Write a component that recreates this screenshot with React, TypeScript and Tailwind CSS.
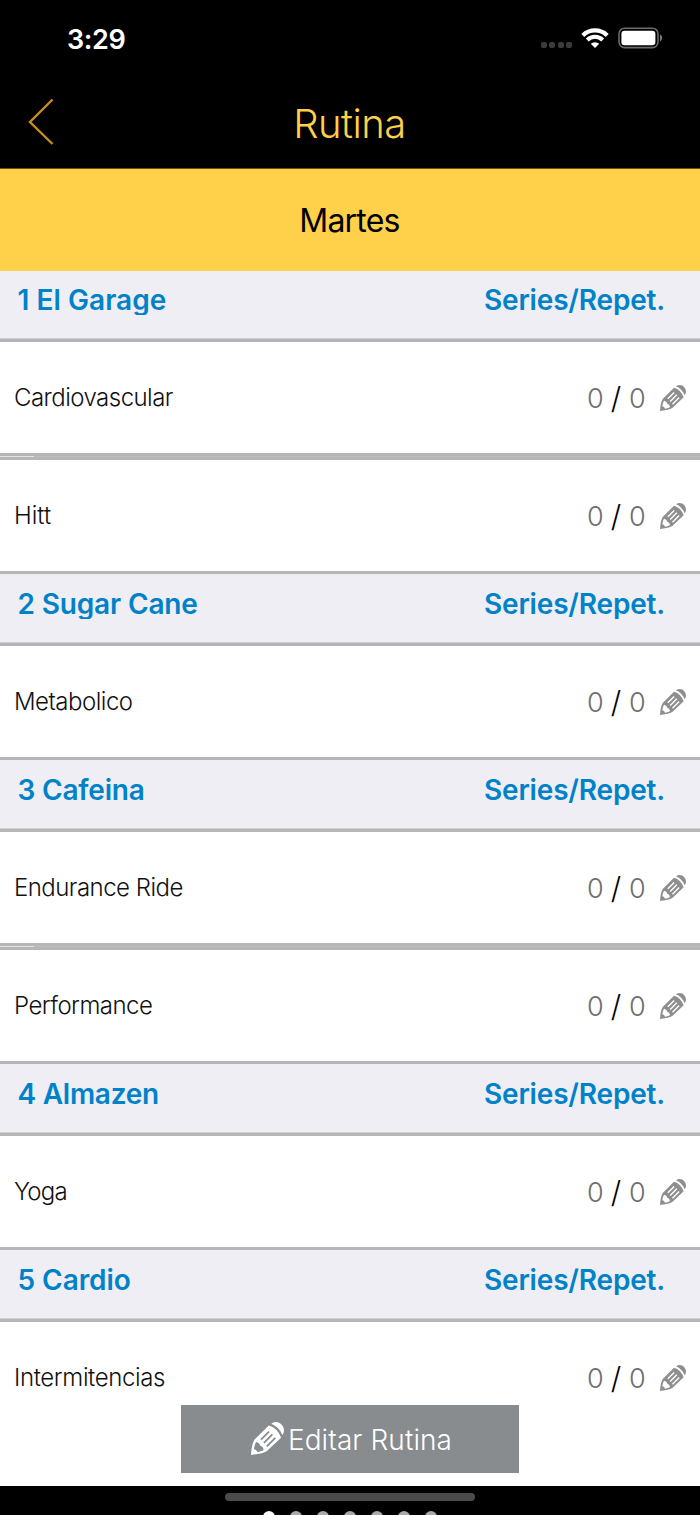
type Exercise = { name: string; spacing: string };
type Section = { title: string; spacing: string; rows: Exercise[] };

const sections: Section[] = [
  {
    title: "1 El Garage",
    spacing: "tracking-[0.05px]",
    rows: [
      { name: "Cardiovascular", spacing: "tracking-[-0.53px]" },
      { name: "Hitt", spacing: "tracking-[0px]" },
    ],
  },
  { title: "2 Sugar Cane", spacing: "tracking-[-0.15px]", rows: [{ name: "Metabolico", spacing: "tracking-[-0.5px]" }] },
  {
    title: "3 Cafeina",
    spacing: "tracking-[-0.2px]",
    rows: [
      { name: "Endurance Ride", spacing: "tracking-[-0.53px]" },
      { name: "Performance", spacing: "tracking-[-0.53px]" },
    ],
  },
  { title: "4 Almazen", spacing: "tracking-[-0.25px]", rows: [{ name: "Yoga", spacing: "tracking-[-0.8px]" }] },
  { title: "5 Cardio", spacing: "tracking-[-0.05px]", rows: [{ name: "Intermitencias", spacing: "tracking-[-0.37px]" }] },
];

function Pencil({ className }: { className: string }) {
  return (
    <svg viewBox="0 0 78 78" className={className} fill="currentColor">
      {/* eraser */}
      <path d="M48 4 C56 -2 66 -1 72 6 C79 13 80 23 74 31 C70 19 60 9 48 4Z" />
      {/* body, with the wood tip and the stripes cut out */}
      <path
        fillRule="evenodd"
        d="M42 8 C56 12 66 22 71 37 L37 69 C27 75 13 76 0 78 C1 66 2 52 8 42Z
           M12 47 C9 53 8 58 7 64 C11 65 14 68 15 71 C21 70 26 69 30 66 C29 60 26 57 22 56 C21 51 17 48 12 47Z
           M22 40 L41 21 L44 24 L25 43Z
           M29 48 L49 28 L52 31 L32 51Z
           M36 56 L56 36 L59 39 L39 59Z"
      />
    </svg>
  );
}

function StatusBar() {
  return (
    <div className="flex h-[76px] items-center pl-[67px] pr-[37px]">
      <span className="pt-[2px] text-[27px] leading-none font-semibold tracking-[-0.4px] text-white">3:29</span>
      <div className="ml-auto flex items-center">
        <div className="mt-[14px] flex gap-[2.5px]">
          <i className="size-[6px] rounded-[2px] bg-[#3b3b3b]" />
          <i className="size-[6px] rounded-[2px] bg-[#3b3b3b]" />
          <i className="size-[6px] rounded-[2px] bg-[#3b3b3b]" />
          <i className="size-[6px] rounded-[2px] bg-[#3b3b3b]" />
        </div>
        <svg viewBox="0 0 28 20" className="ml-[9px] h-[20px] w-[28px]" fill="none">
          <path d="M1.8 7.4 A17.5 17.5 0 0 1 26.2 7.4" stroke="white" strokeWidth="4.2" />
          <path d="M6.3 12 A11 11 0 0 1 21.7 12" stroke="white" strokeWidth="4" />
          <path d="M9.8 15.8 A6.2 6.2 0 0 1 18.2 15.8 L14 20Z" fill="white" />
        </svg>
        <svg viewBox="0 0 45 22" className="ml-[9px] h-[22px] w-[45px]" fill="none">
          <rect x="1" y="1.2" width="39" height="19.4" rx="5.5" stroke="#6b6b6b" strokeWidth="1.6" />
          <rect x="3.4" y="3.8" width="34" height="14.4" rx="3.2" fill="white" />
          <path d="M42 7.6 C44.8 8.8 44.8 13 42 14.4Z" fill="#7a7a7a" />
        </svg>
      </div>
    </div>
  );
}

function SectionHeader({ title, spacing, first }: { title: string; spacing: string; first: boolean }) {
  return (
    <div className={`${first ? "h-[71px]" : "h-[72px]"} flex flex-col border-b-[3px] border-[#b6b6b6] bg-[#efeef4]`}>
      <div
        className={`${first ? "h-[44px] pt-[9px]" : "h-[45px] pt-[10px]"} flex shrink-0 justify-between overflow-hidden pl-[17.5px] pr-[35px] text-[28px] leading-[40px] font-semibold text-[#0082c8]`}
      >
        <span className={spacing}>{title}</span>
        <span className="tracking-[-0.18px]">Series/Repet.</span>
      </div>
      <div className="mt-auto h-px bg-[#cfcfd2]" />
    </div>
  );
}

function ExerciseRow({ name, spacing }: Exercise) {
  return (
    <div className="flex h-[111px] items-center bg-white px-[14px]">
      <span className={`text-[24px] font-light text-[#111] ${spacing}`}>{name}</span>
      <div className="ml-auto flex items-center text-[27px] leading-none font-light">
        <span className="w-[16px] pt-px text-center text-[#6e6e6e]">0</span>
        <span className="w-[26px] text-center text-[30px] font-[350] text-black">/</span>
        <span className="w-[16px] pt-px text-center text-[#6e6e6e]">0</span>
        <Pencil className="ml-[15px] size-[26px] text-[#8e8e8e]" />
      </div>
    </div>
  );
}

export default function App() {
  return (
    <div
      className="relative flex h-[1515px] w-[700px] flex-col overflow-hidden bg-white"
      style={{ fontFamily: 'Inter, "Liberation Sans", sans-serif' }}
    >
      <header className="h-[169px] shrink-0 border-b border-[#6b5210] bg-black">
        <StatusBar />
        <div className="grid h-[92px] grid-cols-[1fr_auto_1fr] items-center">
          <svg viewBox="0 0 26 48" className="ml-[28px] h-[48px] w-[26px]" fill="none">
            <path d="M24.5 1.5 L2 24 L24.5 46" stroke="#c98d1e" strokeWidth="2.4" />
          </svg>
          <h1 className="pt-[4px] pr-px text-[40px] leading-none font-light tracking-[-0.5px] text-[#ffd04a]">Rutina</h1>
        </div>
      </header>

      <div className="flex h-[102px] shrink-0 items-center justify-center bg-[#ffd04a] pt-px pr-px text-[32px] tracking-[-0.8px] text-black">
        Martes
      </div>

      <main className="h-[1215px] shrink-0 overflow-hidden">
        {sections.map((section, s) => (
          <section key={section.title}>
            <SectionHeader title={section.title} spacing={section.spacing} first={s === 0} />
            {section.rows.map((row, i) => (
              <div key={row.name}>
                <ExerciseRow {...row} />
                {i < section.rows.length - 1 ? (
                  <div className="flex h-[7px] flex-col bg-[#b6b6b6] pt-[3px]">
                    <div className="flex h-px bg-[#bdbdbd]">
                      <div className="w-[34px] bg-[#e4e4e4]" />
                    </div>
                  </div>
                ) : (
                  s < sections.length - 1 && <div className="h-[3px] bg-[#b6b6b6]" />
                )}
              </div>
            ))}
          </section>
        ))}
      </main>

      <button className="absolute left-[181px] top-[1405px] flex h-[67.5px] w-[338px] items-center justify-center bg-[#888c8f] pl-[3px] text-[28px] font-[350] tracking-[0.1px] text-white">
        <Pencil className="mr-[4px] size-[33px]" />
        <span className="pt-[3px]">Editar Rutina</span>
      </button>

      <footer className="flex h-[29px] shrink-0 flex-col items-center bg-black pt-[7px]">
        <div className="h-[8px] w-[250px] shrink-0 rounded-full bg-[#4b4b4b]" />
        <div className="mt-[10px] flex shrink-0 gap-[15px]">
          <i className="size-[12px] rounded-full bg-white" />
          <i className="size-[12px] rounded-full bg-[#aaa]" />
          <i className="size-[12px] rounded-full bg-[#aaa]" />
          <i className="size-[12px] rounded-full bg-[#aaa]" />
          <i className="size-[12px] rounded-full bg-[#aaa]" />
          <i className="size-[12px] rounded-full bg-[#aaa]" />
          <i className="size-[12px] rounded-full bg-[#aaa]" />
        </div>
      </footer>
    </div>
  );
}
